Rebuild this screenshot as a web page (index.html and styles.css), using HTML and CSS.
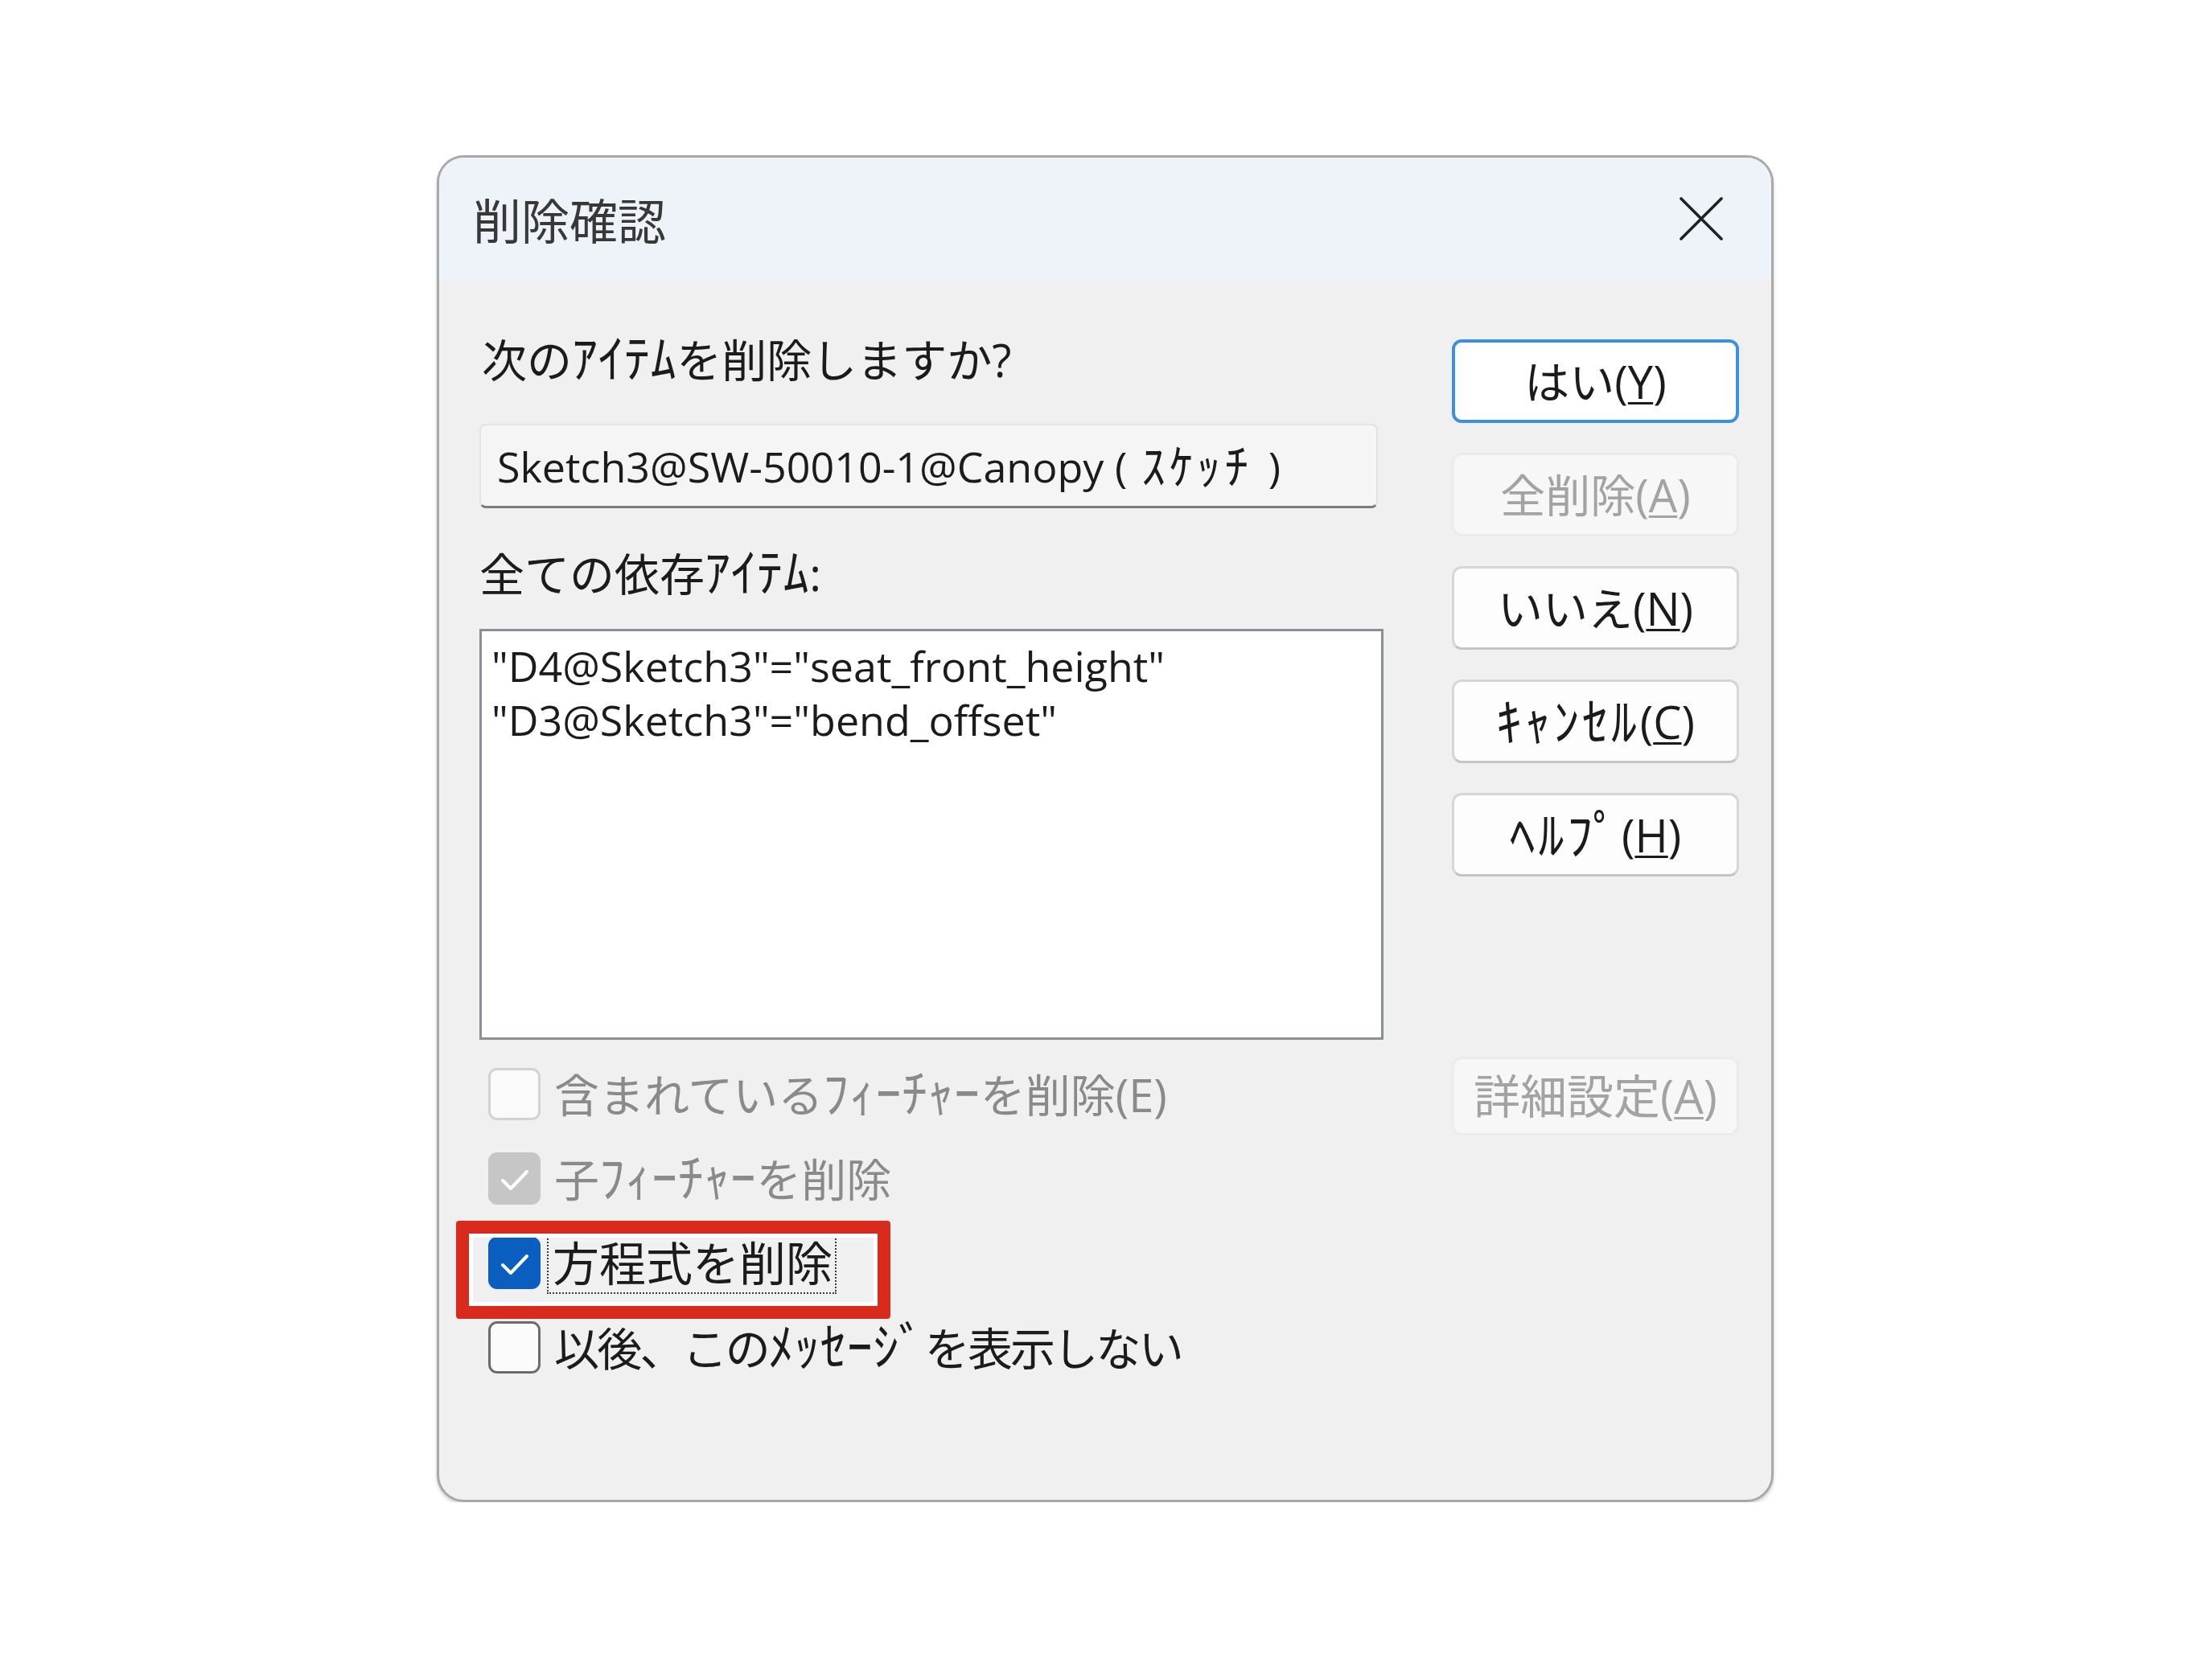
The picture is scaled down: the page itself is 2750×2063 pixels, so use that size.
FILE: index.html
```html
<!DOCTYPE html>
<html lang="ja">
<head>
<meta charset="utf-8">
<title>削除確認</title>
<link rel="stylesheet" href="styles.css">
</head>
<body>
<div class="dialog">
  <div class="titlebar">
    <span class="title">削除確認</span>
    <svg class="close" viewBox="0 0 58 58" width="58" height="58" aria-hidden="true">
      <path d="M4 4 L54 54 M54 4 L4 54" stroke="#222" stroke-width="3.6" fill="none" stroke-linecap="round"/>
    </svg>
  </div>
  <div class="content">
    <div class="main">
      <div class="label first">次の<span class="hw">ｱｲﾃﾑ</span>を削除しますか?</div>
      <div class="field">Sketch3@SW-50010-1@Canopy (<span class="hw pad">ｽｹｯﾁ</span>)</div>
      <div class="label second">全ての依存<span class="hw">ｱｲﾃﾑ</span>:</div>
      <div class="listbox">
        <div class="item">"D4@Sketch3"="seat_front_height"</div>
        <div class="item">"D3@Sketch3"="bend_offset"</div>
      </div>
    </div>
    <div class="buttons">
      <div class="btn default">はい(<u>Y</u>)</div>
      <div class="btn disabled">全削除(<u>A</u>)</div>
      <div class="btn">いいえ(<u>N</u>)</div>
      <div class="btn"><span class="hw">ｷｬﾝｾﾙ</span>(<u>C</u>)</div>
      <div class="btn"><span class="hw">ﾍﾙﾌﾟ</span>(<u>H</u>)</div>
    </div>
    <div class="checks">
      <div class="check off-disabled">
        <span class="box"></span>
        <span class="text muted">含まれている<span class="hw">ﾌｨｰﾁｬｰ</span>を削除(E)</span>
      </div>
      <div class="check on-disabled">
        <span class="box"><svg viewBox="0 0 65 65" width="65" height="65"><polyline points="18,35 28,45 48,24" fill="none" stroke="#fff" stroke-width="4" stroke-linecap="round" stroke-linejoin="round"/></svg></span>
        <span class="text muted">子<span class="hw">ﾌｨｰﾁｬｰ</span>を削除</span>
      </div>
      <div class="check on">
        <span class="box"><svg viewBox="0 0 65 65" width="65" height="65"><polyline points="18,35 28,45 48,24" fill="none" stroke="#fff" stroke-width="4" stroke-linecap="round" stroke-linejoin="round"/></svg></span>
        <span class="text focus">方程式を削除</span>
        <span class="highlight"></span>
      </div>
      <div class="check off">
        <span class="box"></span>
        <span class="text tight">以後、この<span class="hw">ﾒｯｾｰｼﾞ</span>を表示しない</span>
      </div>
    </div>
    <div class="side">
      <div class="btn disabled small">詳細設定(<u>A</u>)</div>
    </div>
  </div>
</div>
</body>
</html>
```

FILE: styles.css
```css
* { box-sizing: border-box; }

html, body {
  margin: 0;
  padding: 0;
  background: #ffffff;
}

body {
  font-family: "Open Sans", "Noto Sans CJK JP", sans-serif;
  color: #1b1b1b;
}

.dialog {
  margin: 193px 0 0 543px;
  width: 1662px;
  height: 1675px;
  border: 3px solid #a8a8a8;
  border-radius: 34px;
  overflow: hidden;
  background: #f0f0f0;
  display: flex;
  flex-direction: column;
  box-shadow: 0 3px 4px rgba(0, 0, 0, 0.18);
}

.titlebar {
  height: 152px;
  flex: none;
  background: #eef3fa;
  display: flex;
  align-items: center;
  justify-content: space-between;
  padding: 0 58px 0 42px;
}

.title {
  font-family: "Noto Sans CJK JP", sans-serif;
  font-size: 60px;
  line-height: 72px;
  color: #383838;
}

.close {
  display: block;
}

.content {
  flex: 1;
  display: grid;
  grid-template-columns: 1124px 357px;
  grid-template-rows: auto auto;
  column-gap: 85px;
  row-gap: 15px;
  padding: 65px 40px 0 50px;
  align-content: start;
}

.main {
  display: flex;
  flex-direction: column;
}

.label {
  font-size: 56px;
  line-height: 68px;
  height: 68px;
  white-space: nowrap;
}

.label.first { padding-left: 3px; }

.hw {
  font-size: 1.14em;
  line-height: 0;
  letter-spacing: 0.01em;
}

.hw.pad {
  margin: 0 20px 0 18px;
  letter-spacing: 0.08em;
}

.field {
  margin-top: 46px;
  height: 105px;
  width: 1117px;
  background: #f5f5f5;
  border: 2px solid #e3e3e3;
  border-bottom: 3px solid #7c7c7c;
  border-radius: 8px;
  padding-left: 20px;
  display: flex;
  align-items: center;
  font-size: 52px;
  white-space: nowrap;
}

.label.second { margin-top: 47px; }

.listbox {
  margin-top: 35px;
  height: 511px;
  background: #ffffff;
  border: 3px solid #8a8f97;
  padding: 9px 12px;
}

.item {
  font-size: 52px;
  line-height: 67px;
  white-space: nowrap;
}

.buttons {
  margin-top: 9px;
  display: flex;
  flex-direction: column;
  gap: 37px;
}

.btn {
  height: 104px;
  border-radius: 12px;
  background: #fdfdfd;
  border: 3px solid #d6d6d6;
  border-bottom-color: #c4c4c4;
  display: flex;
  align-items: center;
  justify-content: center;
  font-size: 56px;
  line-height: 68px;
  white-space: nowrap;
  color: #1b1b1b;
}

.btn .hw { letter-spacing: 0.06em; }

.btn u {
  text-decoration-thickness: 3px;
  text-underline-offset: 4px;
}

.btn.default {
  border: 4px solid #3f8fdc;
  background: #ffffff;
}

.btn.disabled {
  background: #f7f7f7;
  border: 3px solid #ebebeb;
  color: #a3a3a3;
}

.btn.small {
  height: 98px;
  margin-top: 6px;
  font-size: 58px;
}

.checks {
  display: flex;
  flex-direction: column;
}

.check {
  position: relative;
  height: 105px;
  display: flex;
  align-items: center;
}

.box {
  width: 65px;
  height: 65px;
  margin-left: 11px;
  border-radius: 11px;
  flex: none;
  display: flex;
  align-items: center;
  justify-content: center;
}

.box svg { display: block; }

.off-disabled .box {
  background: #fafafa;
  border: 3px solid #d2d2d2;
}

.on-disabled .box {
  background: #c6c6c6;
}

.on .box {
  background: #0a5ec0;
}

.off .box {
  background: #fbfbfb;
  border: 3px solid #6c6c6c;
}

.text {
  margin-left: 17px;
  font-size: 56px;
  line-height: 68px;
  white-space: nowrap;
}

.text.muted { color: #8a8a8a; }

.text.tight { letter-spacing: -0.05em; }

.text.focus {
  margin-left: 8px;
  border: 2px dotted #3a3a3a;
  line-height: 72px;
  font-size: 58px;
  padding: 0 3px 0 5px;
}

.highlight {
  position: absolute;
  left: -29px;
  top: 0;
  width: 540px;
  height: 122px;
  border: 16px solid #d92a1e;
  border-radius: 4px;
  box-shadow: inset 0 0 0 5px #ffffff;
  pointer-events: none;
}

.side {
  display: flex;
  flex-direction: column;
}
```
